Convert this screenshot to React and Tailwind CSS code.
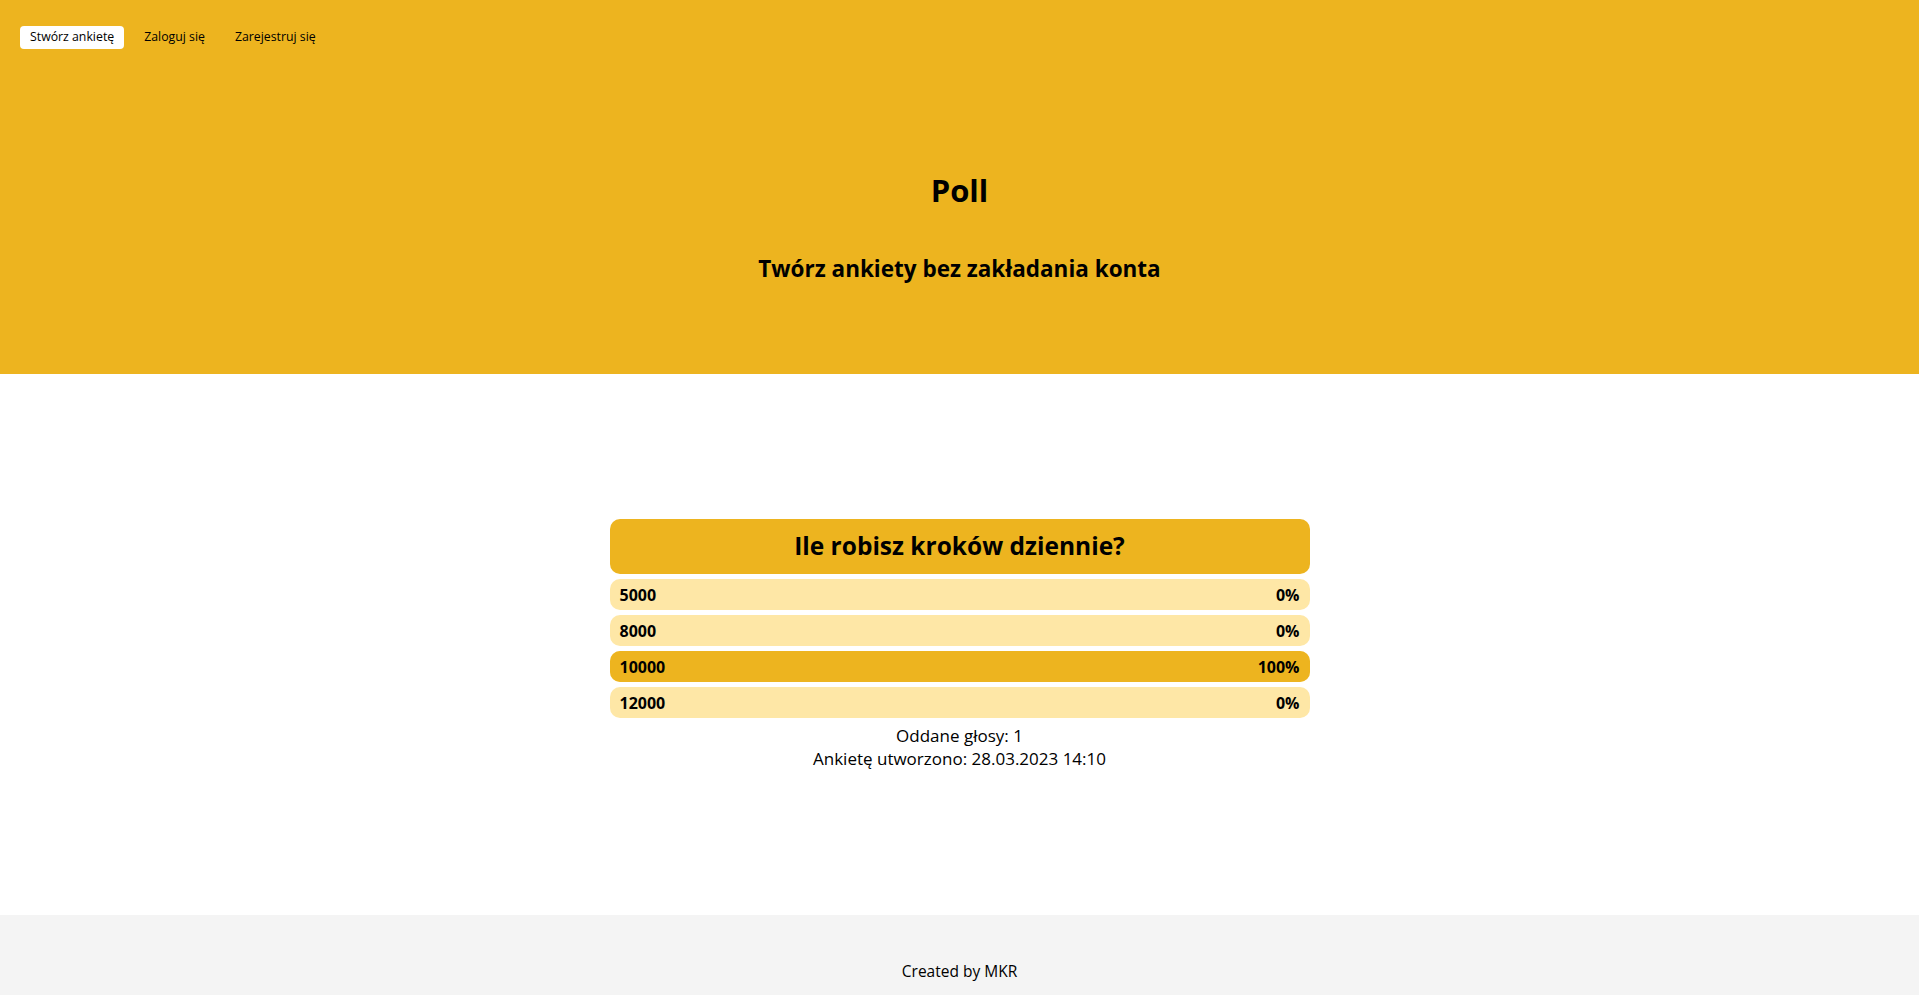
import React from 'react'

const options = [
    { label: '5000', votes: 0 },
    { label: '8000', votes: 0 },
    { label: '10000', votes: 1 },
    { label: '12000', votes: 0 },
]

function App() {
    const total = options.reduce((s, o) => s + o.votes, 0)

    return (
        <div className="w-full font-['Open_Sans',sans-serif] text-black">
            {/* header */}
            <header className="h-[374px] bg-[#edb41f] flex flex-col items-center">
                <nav className="self-start flex gap-[10px] pl-[20px] pt-[26px] text-[12.3px]">
                    <a className="h-[23px] px-[10px] flex items-center bg-white rounded-[4px]">Stwórz ankietę</a>
                    <a className="h-[23px] px-[10px] flex items-center">Zaloguj się</a>
                    <a className="h-[23px] px-[10px] flex items-center">Zarejestruj się</a>
                </nav>
                <h1 className="mt-[121px] text-[31px] leading-[40px] font-bold">Poll</h1>
                <h2 className="mt-[43px] text-[22.5px] leading-[32px] font-bold">Twórz ankiety bez zakładania konta</h2>
            </header>

            {/* poll */}
            <main className="h-[541px] flex flex-col items-center justify-center">
                <div className="w-[700px] flex flex-col gap-[5px]">
                    <div className="h-[55px] rounded-[10px] bg-[#edb41f] flex items-center justify-center">
                        <span className="text-[24.5px] font-bold">Ile robisz kroków dziennie?</span>
                    </div>
                    {options.map((o) => {
                        const pct = total ? Math.round((o.votes / total) * 100) : 0
                        return (
                            <div key={o.label} className="relative h-[31px] rounded-[10px] bg-[#fee7a6] overflow-hidden">
                                <div className="absolute inset-y-0 left-0 bg-[#edb41f]" style={{ width: pct + '%' }}></div>
                                <div className="relative h-full flex items-center justify-between px-[10px] text-[16px] font-bold">
                                    <span>{o.label}</span>
                                    <span>{pct}%</span>
                                </div>
                            </div>
                        )
                    })}
                </div>
                <div className="mt-[6px] text-center text-[17px] leading-[23px]">
                    <p>Oddane głosy: {total}</p>
                    <p>Ankietę utworzono: 28.03.2023 14:10</p>
                </div>
            </main>

            {/* footer */}
            <footer className="h-[110px] bg-[#f4f4f4] flex justify-center pt-[45px]">
                <p className="text-[15.5px] leading-[22px]">Created by MKR</p>
            </footer>
        </div>
    )
}

export default App
